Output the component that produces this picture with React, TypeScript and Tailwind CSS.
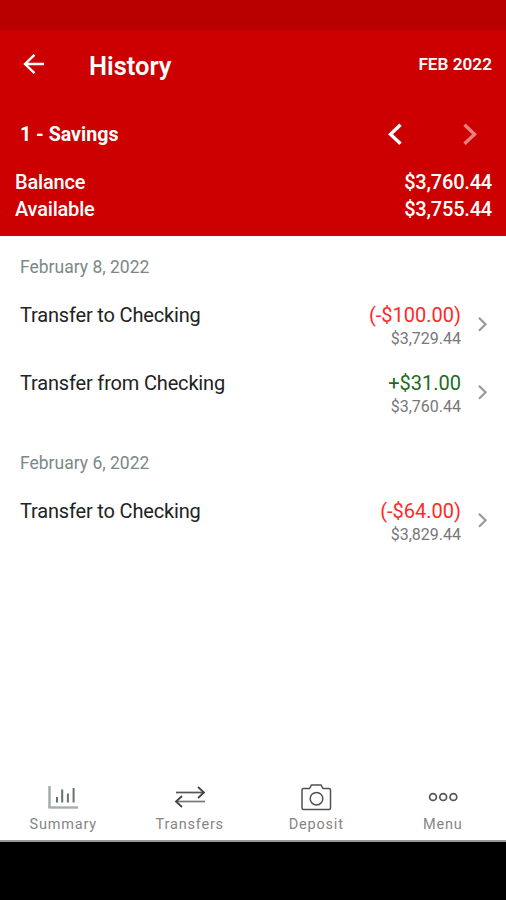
import { clsx } from "clsx"

interface Transaction {
  description: string
  amount: string
  balance: string
  credit?: boolean
}

interface TransactionGroup {
  date: string
  items: Transaction[]
}

const groups: TransactionGroup[] = [
  {
    date: "February 8, 2022",
    items: [
      { description: "Transfer to Checking", amount: "(-$100.00)", balance: "$3,729.44" },
      { description: "Transfer from Checking", amount: "+$31.00", balance: "$3,760.44", credit: true },
    ],
  },
  {
    date: "February 6, 2022",
    items: [
      { description: "Transfer to Checking", amount: "(-$64.00)", balance: "$3,829.44" },
    ],
  },
]

const SummaryIcon = () => (
  <svg width="32" height="28" viewBox="0 0 32 28" fill="none">
    <path d="M2.5 3V25" stroke="#a3a9a8" strokeWidth="2.4" />
    <path d="M1.5 24.5H31" stroke="#a9adac" strokeWidth="2.4" />
    <path d="M10 14V19.5M15.2 6.5V19.5M20.9 10.5V19.5M26.6 5V19.5" stroke="#667371" strokeWidth="2" />
  </svg>
)

const TransfersIcon = () => (
  <svg width="32" height="28" viewBox="0 0 32 28" fill="none">
    <path d="M2 9.5H30" stroke="#555" strokeWidth="1.7" />
    <path d="M24 4L30 9.5L24 15" stroke="#444" strokeWidth="1.8" />
    <path d="M2 18.5H31" stroke="#777" strokeWidth="1.7" />
    <path d="M8 13L2 18.5L8 24" stroke="#444" strokeWidth="1.8" />
  </svg>
)

const DepositIcon = () => (
  <svg width="32" height="28" viewBox="0 0 32 28" fill="none" stroke="#505050" strokeWidth="1.5">
    <path d="M3.5 5.5H9.5L11.5 2H21L23 5.5H29Q30.5 5.5 30.5 7V25Q30.5 26.5 29 26.5H3.5Q2 26.5 2 25V7Q2 5.5 3.5 5.5Z" />
    <circle cx="16.5" cy="15.7" r="6.3" />
  </svg>
)

const MenuIcon = () => (
  <svg width="32" height="28" viewBox="0 0 32 28" fill="none" stroke="#555" strokeWidth="1.7">
    <circle cx="6" cy="14" r="3.4" />
    <circle cx="16.2" cy="14" r="3.4" />
    <circle cx="26.4" cy="14" r="3.4" />
  </svg>
)

const tabs = [
  { label: "Summary", Icon: SummaryIcon },
  { label: "Transfers", Icon: TransfersIcon },
  { label: "Deposit", Icon: DepositIcon },
  { label: "Menu", Icon: MenuIcon },
]

export default function App() {
  return (
    <div className="flex h-[900px] w-[506px] flex-col overflow-hidden bg-white font-['Roboto',sans-serif]">
      {/* Status bar */}
      <div className="h-[30px] shrink-0 bg-[#b90000]" />

      {/* Header */}
      <header className="flex h-[206px] shrink-0 flex-col bg-[#cc0000] text-white">
        <div className="flex h-[70px] items-center pr-[14px] pl-[23px]">
          <button aria-label="Back">
            <svg className="block" width="22" height="22" viewBox="0 0 22 22" fill="none" stroke="#fff" strokeWidth="2.4">
              <path d="M21 10H2M11.5 0.8L2 10L11.5 19.2" />
            </svg>
          </button>
          <h1 className="ml-[44px] pt-px text-[25.5px] leading-[30px] font-semibold">History</h1>
          <span className="ml-auto text-[17.2px] font-semibold">FEB 2022</span>
        </div>

        <div className="flex h-[69px] items-center pr-[28px] pl-[20px]">
          <span className="text-[19.6px] font-bold">1 - Savings</span>
          <div className="ml-auto flex gap-[59px]">
            <button aria-label="Previous account">
              <svg className="block" width="16" height="24" viewBox="0 0 16 24" fill="none" stroke="#fff" strokeWidth="3.4">
                <path d="M13.5 1.7L3.5 11.2L13.5 20.7" />
              </svg>
            </button>
            <button aria-label="Next account" disabled>
              <svg className="block" width="16" height="24" viewBox="0 0 16 24" fill="none" stroke="#e98080" strokeWidth="3.4">
                <path d="M2.5 1.7L12.5 11.2L2.5 20.7" />
              </svg>
            </button>
          </div>
        </div>

        <div className="pr-[14px] pl-[15px] text-[20px] leading-[27px] font-medium tracking-[-0.2px]">
          <div className="flex justify-between">
            <span>Balance</span>
            <span>$3,760.44</span>
          </div>
          <div className="flex justify-between">
            <span>Available</span>
            <span>$3,755.44</span>
          </div>
        </div>
      </header>

      {/* Transactions */}
      <main className="flex-1">
        {groups.map((group) => (
          <section key={group.date} className="pb-px">
            <h2 className="flex h-[59px] items-center pt-[3px] pl-[20px] text-[17.5px] text-[#7b8886]">{group.date}</h2>
            {group.items.map((item, index) => (
              <div key={index} className="flex h-[68px] justify-between pr-[17px] pl-[20px]">
                <p className="pt-[6px] text-[20px] leading-[28px] tracking-[-0.17px] text-[#222]">{item.description}</p>
                <div className="flex">
                  <div className="pt-[6px] text-right">
                    <p className={clsx("text-[20px] leading-[28px]", item.credit ? "text-[#1d6b1d]" : "text-[#ff2828]")}>
                      {item.amount}
                    </p>
                    <p className="text-[16px] leading-[20px] text-[#777]">{item.balance}</p>
                  </div>
                  <svg className="mt-[21px] ml-[16px]" width="12" height="16" viewBox="0 0 12 16" fill="none" stroke="#999" strokeWidth="2.2">
                    <path d="M2 1.7L8.5 8.2L2 14.7" />
                  </svg>
                </div>
              </div>
            ))}
          </section>
        ))}
      </main>

      {/* Bottom navigation */}
      <nav className="grid h-[72px] shrink-0 grid-cols-4 border-b-2 border-[#999]">
        {tabs.map(({ label, Icon }) => (
          <button key={label} className="flex flex-col items-center pt-[13px]">
            <Icon />
            <span className="pt-px text-[14.5px] leading-[26px] tracking-[0.8px] text-[#858585]">{label}</span>
          </button>
        ))}
      </nav>
      <div className="h-[58px] shrink-0 bg-black" />
    </div>
  )
}
